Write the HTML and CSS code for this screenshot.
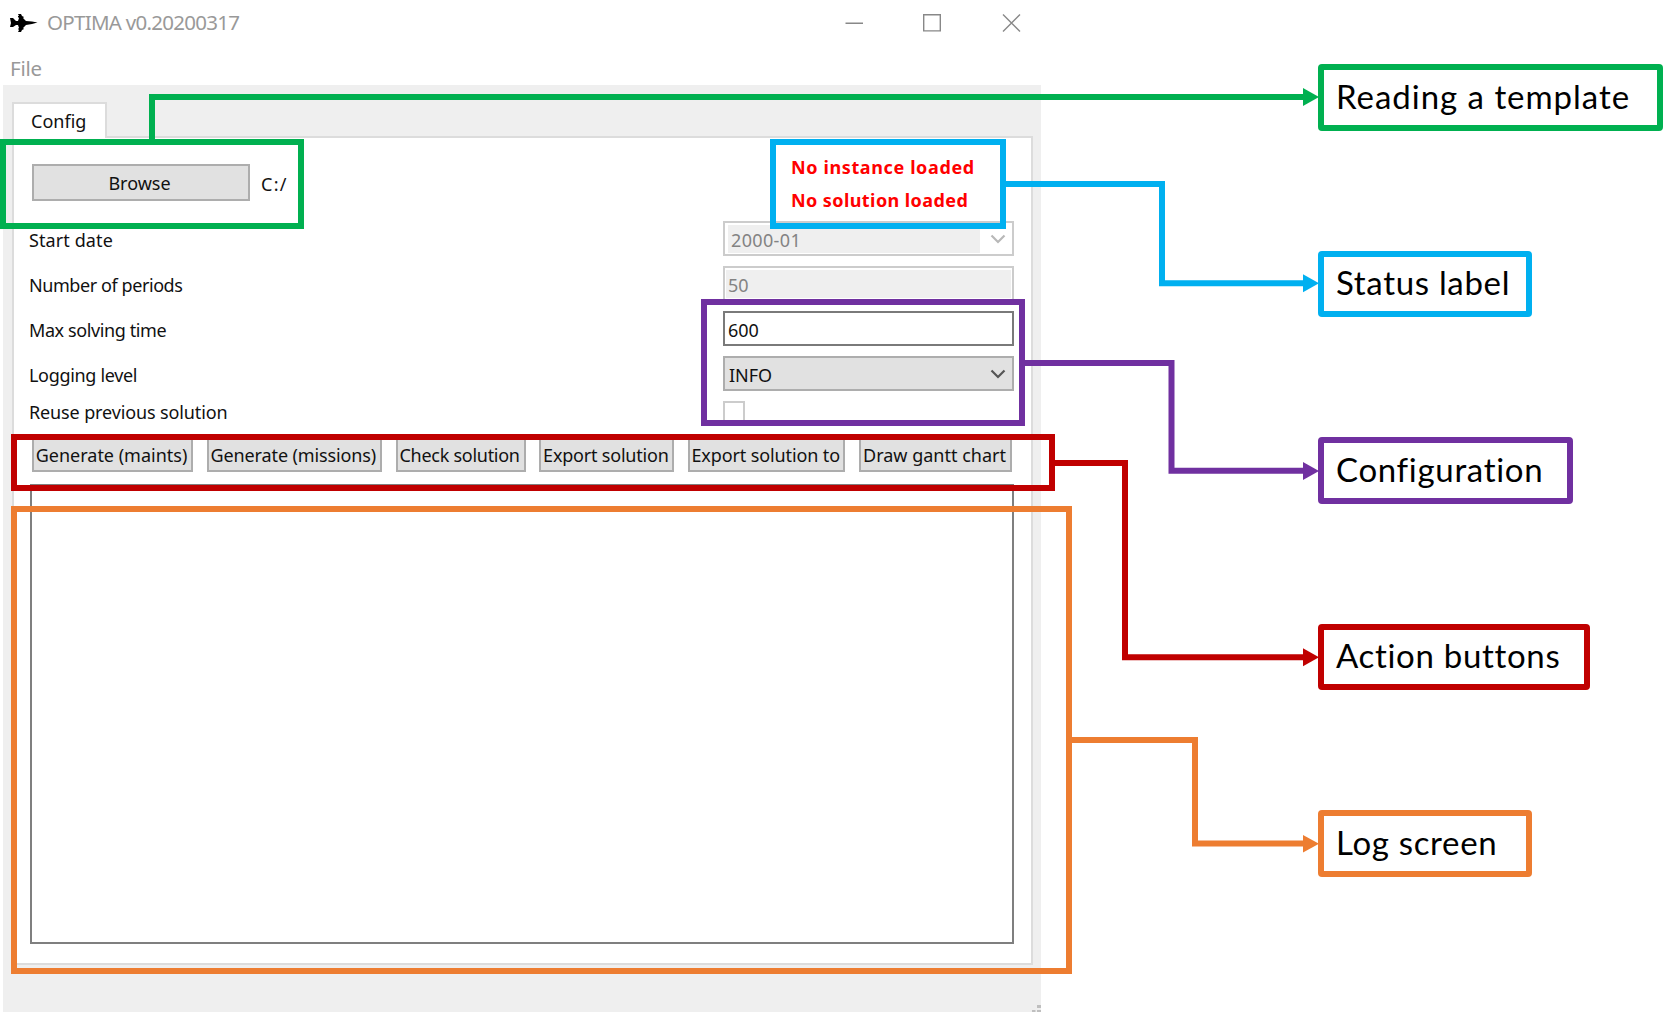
FILE: index.html
```html
<!DOCTYPE html>
<html lang="en">
<head>
<meta charset="utf-8">
<title>OPTIMA v0.20200317</title>
<link rel="stylesheet" href="styles.css">
</head>
<body>
<main class="guide">
  <section class="window">
    <header class="titlebar">
      <svg class="plane" width="28" height="18" viewBox="0 0 28 18"><path d="M0 4L3 4L6 7L8 7L9 4L8 3L8 2L9 2L8 0L11 0L12 2L14 3L13 4L16 7L22 7.500L27.500 8.500L22 10L16 11L13 14L14 15L12 16L11 18L8 18L9 16L8 15L9 14L8 11L6 11L3 13L0 13L1 9Z"/></svg>
      <span class="title"><span class="t t-title">OPTIMA v0.20200317</span></span>
      <svg class="controls" width="176" height="18" viewBox="0 0 176 18" fill="none" stroke="#888" stroke-width="1.4"><path d="M0.500 9.300H18M78.700 .7H95.300V16.900H78.700ZM158 .5L175 17.500M175 .5L158 17.500"/></svg>
    </header>
    <nav class="menubar"><span class="t t-file">File</span></nav>
    <div class="client">
      <div class="tab"><span class="t t-config">Config</span></div>
      <div class="pane">
        <div class="top">
          <button class="button browse"><span class="t t-browse">Browse</span></button>
          <span class="path"><span class="t t-path">C:/</span></span>
          <div class="status"><span class="t t-inst">No instance loaded</span><span class="t t-sol">No solution loaded</span></div>
        </div>
        <div class="row"><label><span class="t t-l1">Start date</span></label>
          <div class="field off combo"><span class="fill"><span class="t t-date">2000-01</span></span><svg width="16" height="10" viewBox="0 0 16 10"><path d="M1.500 1.500L8 8L14.500 1.500"/></svg></div></div>
        <div class="row"><label><span class="t t-l2">Number of periods</span></label>
          <div class="field off"><span class="fill"><span class="t">50</span></span></div></div>
        <div class="row"><label><span class="t t-l3">Max solving time</span></label>
          <div class="field"><span class="t">600</span></div></div>
        <div class="row"><label><span class="t t-l4">Logging level</span></label>
          <div class="field select"><span class="t">INFO</span><svg width="16" height="10" viewBox="0 0 16 10"><path d="M1.500 1.500L8 8L14.500 1.500"/></svg></div></div>
        <div class="row check"><label><span class="t t-l5">Reuse previous solution</span></label><span class="box"></span></div>
        <div class="actions">
          <button class="button b1"><span class="t">Generate (maints)</span></button>
          <button class="button b2"><span class="t">Generate (missions)</span></button>
          <button class="button b3"><span class="t">Check solution</span></button>
          <button class="button b4"><span class="t">Export solution</span></button>
          <button class="button b5"><span class="t">Export solution to</span></button>
          <button class="button b6"><span class="t">Draw gantt chart</span></button>
        </div>
        <div class="log"></div>
      </div>
      <svg class="grip" width="9" height="7" viewBox="0 0 9 7" fill="#bfbfbf"><path d="M5 0h4v3h-4zM5 5h4v2h-4zM0 5h3.500v2h-3.500z"/></svg>
    </div>
  </section>
  <aside class="callouts">
    <div class="callout green"><span class="t">Reading a template</span></div>
    <div class="callout blue"><span class="t">Status label</span></div>
    <div class="callout purple"><span class="t">Configuration</span></div>
    <div class="callout red"><span class="t">Action buttons</span></div>
    <div class="callout orange"><span class="t">Log screen</span></div>
  </aside>
  <svg class="marks" width="1663" height="1012" viewBox="0 0 1663 1012" fill="none" stroke-width="6">
    <g stroke="#00b050"><path d="M3 142H301V226H3ZM152 142V97H1304"/><path class="head" fill="#00b050" d="M1303 88L1319 97L1303 106Z"/></g>
    <g stroke="#00b0f0"><path d="M773 142H1003V226H773ZM1003 184H1162V283.300H1304"/><path class="head" fill="#00b0f0" d="M1303 274.300L1319 283.300L1303 292.300Z"/></g>
    <g stroke="#7030a0"><path d="M704 302H1022V423H704ZM1022 363H1171.500V470.800H1304"/><path class="head" fill="#7030a0" d="M1303 462L1319 471L1303 480Z"/></g>
    <g stroke="#c00000"><path d="M14 437H1052V488H14ZM1052 463H1125V657.300H1304"/><path class="head" fill="#c00000" d="M1303 648.300L1319 657.300L1303 666.300Z"/></g>
    <g stroke="#ed7d31"><path d="M14 509H1069V971H14ZM1069 740H1195V843.500H1304"/><path class="head" fill="#ed7d31" d="M1303 835L1319 843.700L1303 852.500Z"/></g>
  </svg>
</main>
</body>
</html>
```
FILE: styles.css
```css
* { box-sizing: border-box; }
body { margin: 0; background: #fff; overflow: hidden; }
.guide { position: relative; display: flex; width: 1663px; height: 1012px; font: 18px/24px "Noto Sans", sans-serif; color: #111; }
.t { white-space: nowrap; }
.window { display: flex; flex-direction: column; width: 1041px; padding-left: 3px; }
.titlebar { display: flex; align-items: center; height: 45px; padding: 0 20px 0 7px; }
.title { flex: 1; padding: 0 0 2px 9px; font-size: 20.500px; color: #999; }
.t-title { letter-spacing: -.72px; }
.plane { fill: #000; }
.menubar { height: 40px; padding: 11px 7px 0; font-size: 20.500px; color: #999; }
.t-file { letter-spacing: -.2px; }
.client { position: relative; flex: 1; padding: 17px 8px 0 9px; background: #efefef; }
.tab { width: 95px; height: 36px; padding: 5px 0 0 17px; background: #fff; border: 2px solid #dcdcdc; border-bottom: 0; position: relative; margin-bottom: -2px; z-index: 1; }
.pane { display: flex; flex-direction: column; width: 1021px; height: 829px; padding: 0 17px 19px 16px; background: #fff; border: 2px solid #dcdcdc; }
.top { display: flex; height: 83px; }
.button { padding: 0; font: inherit; color: inherit; background: #e1e1e1; border: 2px solid #adadad; border-radius: 0; white-space: nowrap; }
.browse { width: 218px; height: 37px; margin: 26px 0 0 2px; }
.t-browse { margin-right: 3px; }
.path { margin: 34px 0 0 11px; }
.t-path { letter-spacing: 1.300px; }
.status { display: flex; flex-direction: column; gap: 9px; width: 223px; margin: 17px 0 0 auto; font-weight: 700; color: #f00; }
.t-inst { letter-spacing: .62px; }
.t-sol { letter-spacing: .42px; }
.row { display: flex; justify-content: space-between; align-items: center; height: 35px; margin-bottom: 10px; }
.row label { padding-top: 2px; margin-left: -1px; }
.t-l1 { letter-spacing: .1px; }
.t-l2 { letter-spacing: -.42px; }
.t-l3 { letter-spacing: -.4px; }
.t-l4 { letter-spacing: -.32px; }
.t-l5 { letter-spacing: -.13px; }
.field { display: flex; align-items: center; justify-content: space-between; width: 291px; height: 35px; padding: 0 3px; border: 2px solid #7a7a7a; }
.field .t { padding-top: 2px; }
.field svg { fill: none; stroke: #555; stroke-width: 2.200px; margin-right: 3px; }
.off { border-color: #ccc; color: #838383; }
.off svg { stroke: #b8b8b8; }
.off .fill { display: flex; align-items: center; flex: 1; height: 28px; padding-left: 2px; background: #efefef; }
.off:not(.combo) { padding: 0 1px; }
.combo .fill { flex: 0 0 252px; padding-left: 3px; }
.t-date { letter-spacing: .35px; }
.select { background: #e1e1e1; border-color: #adadad; padding-left: 4px; }
.check { height: 22px; margin: 0 0 14px; }
.check label { padding-top: 0; }
.box { width: 22px; height: 22px; margin-right: 269px; border: 2px solid #ccc; }
.actions { display: flex; justify-content: space-between; width: 980px; height: 35px; margin-left: 2px; }
.b1 { width: 161px; } .b2 { width: 175px; } .b3 { width: 130px; } .b4 { width: 135px; } .b5 { width: 157px; } .b6 { width: 153px; }
.b2 { letter-spacing: -.12px; }
.b3 { letter-spacing: -.27px; }
.b4 { letter-spacing: -.2px; }
.b5 { letter-spacing: -.12px; }
.actions .t { margin-right: 2px; }
.log { flex: 1; margin-top: 12px; border: 2px solid #7f7f7f; }
.grip { position: absolute; right: 0; bottom: 0; }
.callouts { display: flex; flex-direction: column; gap: 120.100px; padding: 64px 0 0 277px; font: 33px/40px Lato, sans-serif; color: #000; }
.callout { height: 66.500px; padding: 5.500px 0 0 12px; border: 6px solid; border-radius: 4px; background: #fff; letter-spacing: .68px; }
.callout .t { color: #000; }
.green { width: 345px; border-color: #00b050; letter-spacing: .97px; }
.blue { width: 214px; border-color: #00b0f0; }
.purple { width: 255px; border-color: #7030a0; }
.red { width: 272px; border-color: #c00000; }
.orange { width: 214px; border-color: #ed7d31; }
.marks { position: absolute; left: 0; top: 0; pointer-events: none; }
.head { stroke: none; }
```
